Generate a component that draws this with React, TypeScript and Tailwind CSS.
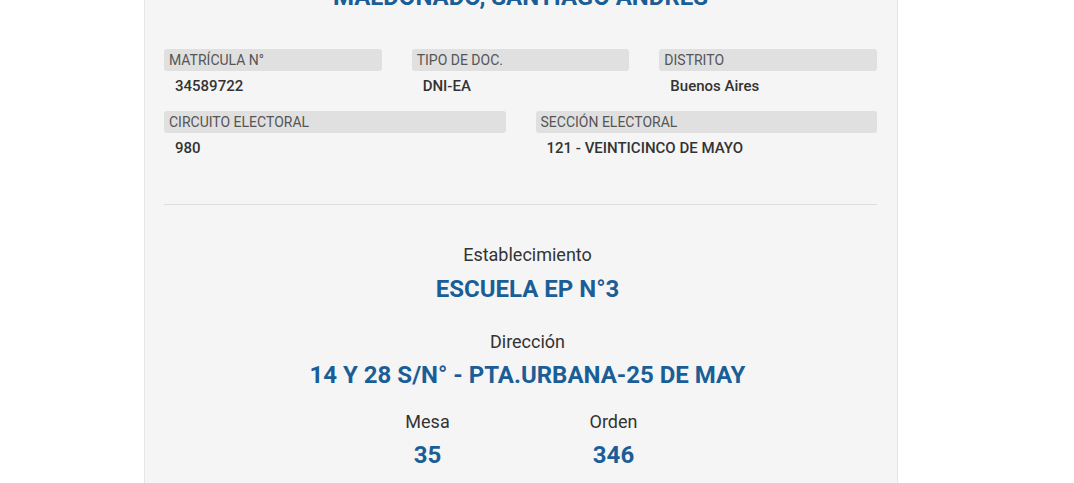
const font = { fontFamily: "Roboto, 'Liberation Sans', sans-serif" };

type Field = { label: string; value: string };

const rowOne: Field[] = [
  { label: "MATRÍCULA N°", value: "34589722" },
  { label: "TIPO DE DOC.", value: "DNI-EA" },
  { label: "DISTRITO", value: "Buenos Aires" },
];

const rowTwo: Field[] = [
  { label: "CIRCUITO ELECTORAL", value: "980" },
  { label: "SECCIÓN ELECTORAL", value: "121 - VEINTICINCO DE MAYO" },
];

function DataField({ label, value }: Field) {
  return (
    <div className="flex flex-col">
      <div className="h-[22px] rounded-[3px] bg-[#e0e0e0] pl-[5px] text-[14px] leading-[22px] text-[#555555]">
        {label}
      </div>
      <div className="py-1 pl-[11px] text-[15px] font-medium leading-[22px] text-[#333333]">
        {value}
      </div>
    </div>
  );
}

export default function App() {
  return (
    <div className="min-h-screen overflow-hidden bg-white" style={font}>
      <div className="ml-[144px] min-h-[483px] w-[754px] border-x border-[#e6e6e6] bg-[#f5f5f5] pl-[19px] pr-5 pb-10">
        {/* Voter name, scrolled partly out of view */}
        <h1 className="-mt-[18px] text-center text-[24px] font-bold leading-[30px] text-[#1b5e97]">
          MALDONADO, SANTIAGO ANDRES
        </h1>

        <div className="mt-[37px] grid grid-cols-3 gap-x-[30px]">
          {rowOne.map((f) => (
            <DataField key={f.label} {...f} />
          ))}
        </div>
        <div className="mt-[10px] grid grid-cols-2 gap-x-[30px]">
          {rowTwo.map((f) => (
            <DataField key={f.label} {...f} />
          ))}
        </div>

        <hr className="mt-[41px] border-t border-[#dedede]" />

        <div className="mt-[38px] flex flex-col items-center text-center">
          <div className="flex flex-col items-center pl-[14px]">
            <div className="text-[18px] leading-[24px] text-[#333333]">
              Establecimiento
            </div>
            <div className="mt-[7px] text-[24px] font-bold leading-[30px] text-[#1b5e97]">
              ESCUELA EP N°3
            </div>

            <div className="mt-[26px] text-[18px] leading-[24px] text-[#333333]">
              Dirección
            </div>
            <div className="mt-[6px] text-[24px] font-bold leading-[30px] text-[#1b5e97]">
              14 Y 28 S/N° - PTA.URBANA-25 DE MAY
            </div>
          </div>

          <div className="mt-[20px] grid w-[372px] grid-cols-2">
            <div className="flex flex-col items-center">
              <div className="text-[18px] leading-[24px] text-[#333333]">
                Mesa
              </div>
              <div className="mt-[6px] text-[24px] font-bold leading-[30px] text-[#1b5e97]">
                35
              </div>
            </div>
            <div className="flex flex-col items-center">
              <div className="text-[18px] leading-[24px] text-[#333333]">
                Orden
              </div>
              <div className="mt-[6px] text-[24px] font-bold leading-[30px] text-[#1b5e97]">
                346
              </div>
            </div>
          </div>
        </div>
      </div>
    </div>
  );
}
